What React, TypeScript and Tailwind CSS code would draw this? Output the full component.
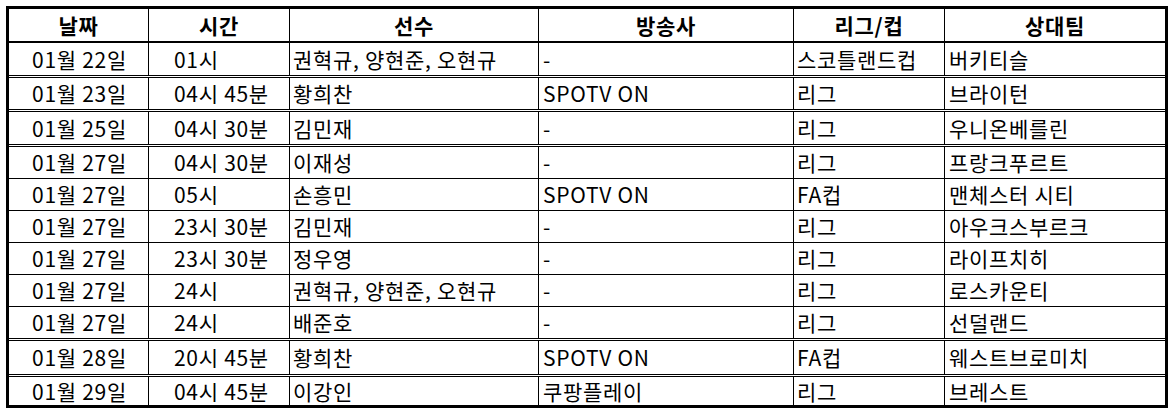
const rows = [
  { date: '01월 22일', time: '01시', player: '권혁규, 양현준, 오현규', tv: '-', league: '스코틀랜드컵', vs: '버키티슬', h: 'h-[32px]', top: '' },
  { date: '01월 23일', time: '04시 45분', player: '황희찬', tv: 'SPOTV ON', league: '리그', vs: '브라이턴', h: 'h-[34px]', top: 'border-t-[3px] border-double' },
  { date: '01월 25일', time: '04시 30분', player: '김민재', tv: '-', league: '리그', vs: '우니온베를린', h: 'h-[35px]', top: 'border-t-[3px] border-double' },
  { date: '01월 27일', time: '04시 30분', player: '이재성', tv: '-', league: '리그', vs: '프랑크푸르트', h: 'h-[34px]', top: 'border-t-[3px] border-double' },
  { date: '01월 27일', time: '05시', player: '손흥민', tv: 'SPOTV ON', league: 'FA컵', vs: '맨체스터 시티', h: 'h-[32px]', top: 'border-t' },
  { date: '01월 27일', time: '23시 30분', player: '김민재', tv: '-', league: '리그', vs: '아우크스부르크', h: 'h-[32px]', top: 'border-t' },
  { date: '01월 27일', time: '23시 30분', player: '정우영', tv: '-', league: '리그', vs: '라이프치히', h: 'h-[32px]', top: 'border-t' },
  { date: '01월 27일', time: '24시', player: '권혁규, 양현준, 오현규', tv: '-', league: '리그', vs: '로스카운티', h: 'h-[32px]', top: 'border-t' },
  { date: '01월 27일', time: '24시', player: '배준호', tv: '-', league: '리그', vs: '선덜랜드', h: 'h-[32px]', top: 'border-t' },
  { date: '01월 28일', time: '20시 45분', player: '황희찬', tv: 'SPOTV ON', league: 'FA컵', vs: '웨스트브로미치', h: 'h-[36px]', top: 'border-t-[3px] border-double' },
  { date: '01월 29일', time: '04시 45분', player: '이강인', tv: '쿠팡플레이', league: '리그', vs: '브레스트', h: 'h-[31px]', top: 'border-t-[3px] border-double' },
]

const cols = 'grid grid-cols-[139px_141px_249px_255px_151px_221px]'
const cell = 'flex items-center border-l border-black whitespace-nowrap overflow-hidden'

export default function App() {
  return (
    <div className="w-[1176px] h-[418px] bg-white pt-[6px] pl-[6px] text-black font-['Noto_Sans_CJK_KR',sans-serif] text-[21px] tracking-[0.7px] leading-none">
      <div className="w-[1162px] border-[3px] border-black">
        <div className={`${cols} h-[34px] border-b-2 border-black font-bold`}>
          <div className="flex items-center justify-center">날짜</div>
          <div className={`${cell} justify-center`}>시간</div>
          <div className={`${cell} justify-center`}>선수</div>
          <div className={`${cell} justify-center`}>방송사</div>
          <div className={`${cell} justify-center`}>리그/컵</div>
          <div className={`${cell} justify-center`}>상대팀</div>
        </div>
        {rows.map((r, i) => (
          <div key={i} className={`${cols} ${r.h} ${r.top} border-black`}>
            <div className="flex items-center justify-center pl-[2px]">{r.date}</div>
            <div className={`${cell} pl-[25px]`}>{r.time}</div>
            <div className={`${cell} pl-[3px]`}>{r.player}</div>
            <div className={`${cell} pl-[4px]`}>{r.tv}</div>
            <div className={`${cell} pl-[3px]`}>{r.league}</div>
            <div className={`${cell} pl-[4px]`}>{r.vs}</div>
          </div>
        ))}
      </div>
    </div>
  )
}
